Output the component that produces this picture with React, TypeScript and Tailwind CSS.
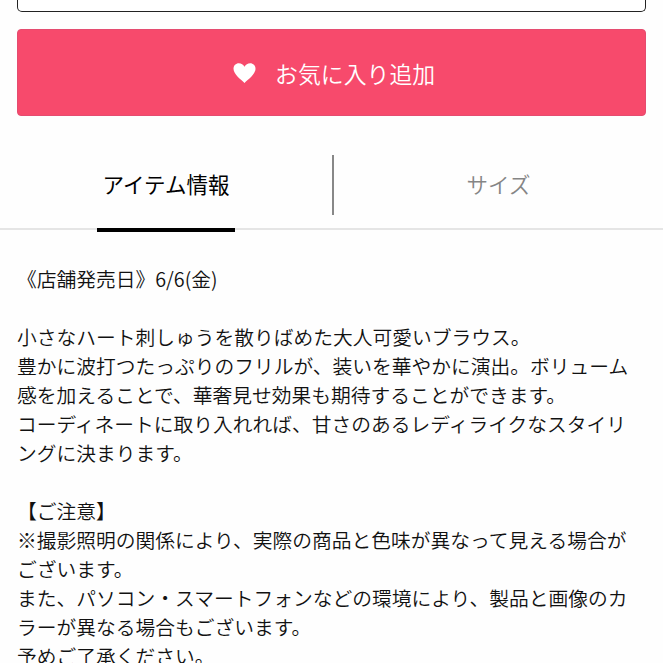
const lines = [
  "《店舗発売日》6/6(金)",
  "",
  "小さなハート刺しゅうを散りばめた大人可愛いブラウス。",
  "豊かに波打つたっぷりのフリルが、装いを華やかに演出。ボリューム",
  "感を加えることで、華奢見せ効果も期待することができます。",
  "コーディネートに取り入れれば、甘さのあるレディライクなスタイリ",
  "ングに決まります。",
  "",
  "【ご注意】",
  "※撮影照明の関係により、実際の商品と色味が異なって見える場合が",
  "ございます。",
  "また、パソコン・スマートフォンなどの環境により、製品と画像のカ",
  "ラーが異なる場合もございます。",
  "予めご了承ください。",
];

export default function App() {
  return (
    <main className="h-[663px] w-[663px] overflow-hidden bg-[#fefefe] font-['Noto_Sans_CJK_JP',sans-serif] font-[350] text-[#111]">
      <div className="mx-[17px] h-3 rounded-b-[5px] border border-t-0 border-[#222] bg-white" />
      <button className="mx-[17px] mt-[17px] flex h-[87px] w-[629px] items-center rounded-[4px] border border-[#e54c70] bg-[#f74a6c] pl-[215px] text-[22.9px] text-white">
        <svg className="mr-[19px] h-[20px] w-[23px] shrink-0" viewBox="0 0 23 20" fill="currentColor">
          <path d="M11.5 20C8 16.7 0.5 11.3 0.5 5.8 0.5 2.4 2.9 0.2 5.8 0.2 8.3 0.2 10.3 1.5 11.5 3.7 12.7 1.5 14.7 0.2 17.2 0.2 20.1 0.2 22.5 2.4 22.5 5.8 22.5 11.3 15 16.7 11.5 20Z" />
        </svg>
        <span className="pt-0.5">お気に入り追加</span>
      </button>
      <nav className="mt-[39px] flex h-[75px] border-b-2 border-[#e5e5e5] text-[21.5px]">
        <div className="flex h-[77px] w-[332px] justify-center">
          <div className="h-[77px] w-[138px] border-b-4 border-black pt-[14px] text-center leading-[30px] font-normal text-black">アイテム情報</div>
        </div>
        <div className="h-[60px] w-[2px] bg-[#888]" />
        <div className="flex-1 pt-[14px] text-center leading-[30px] text-[#858585]">サイズ</div>
      </nav>
      <section className="pt-[34px] pl-[17px] text-[19.75px] leading-[29px] whitespace-nowrap">
        {lines.map((line, i) => (
          <p key={i} className="h-[29px]">{line}</p>
        ))}
      </section>
    </main>
  );
}
